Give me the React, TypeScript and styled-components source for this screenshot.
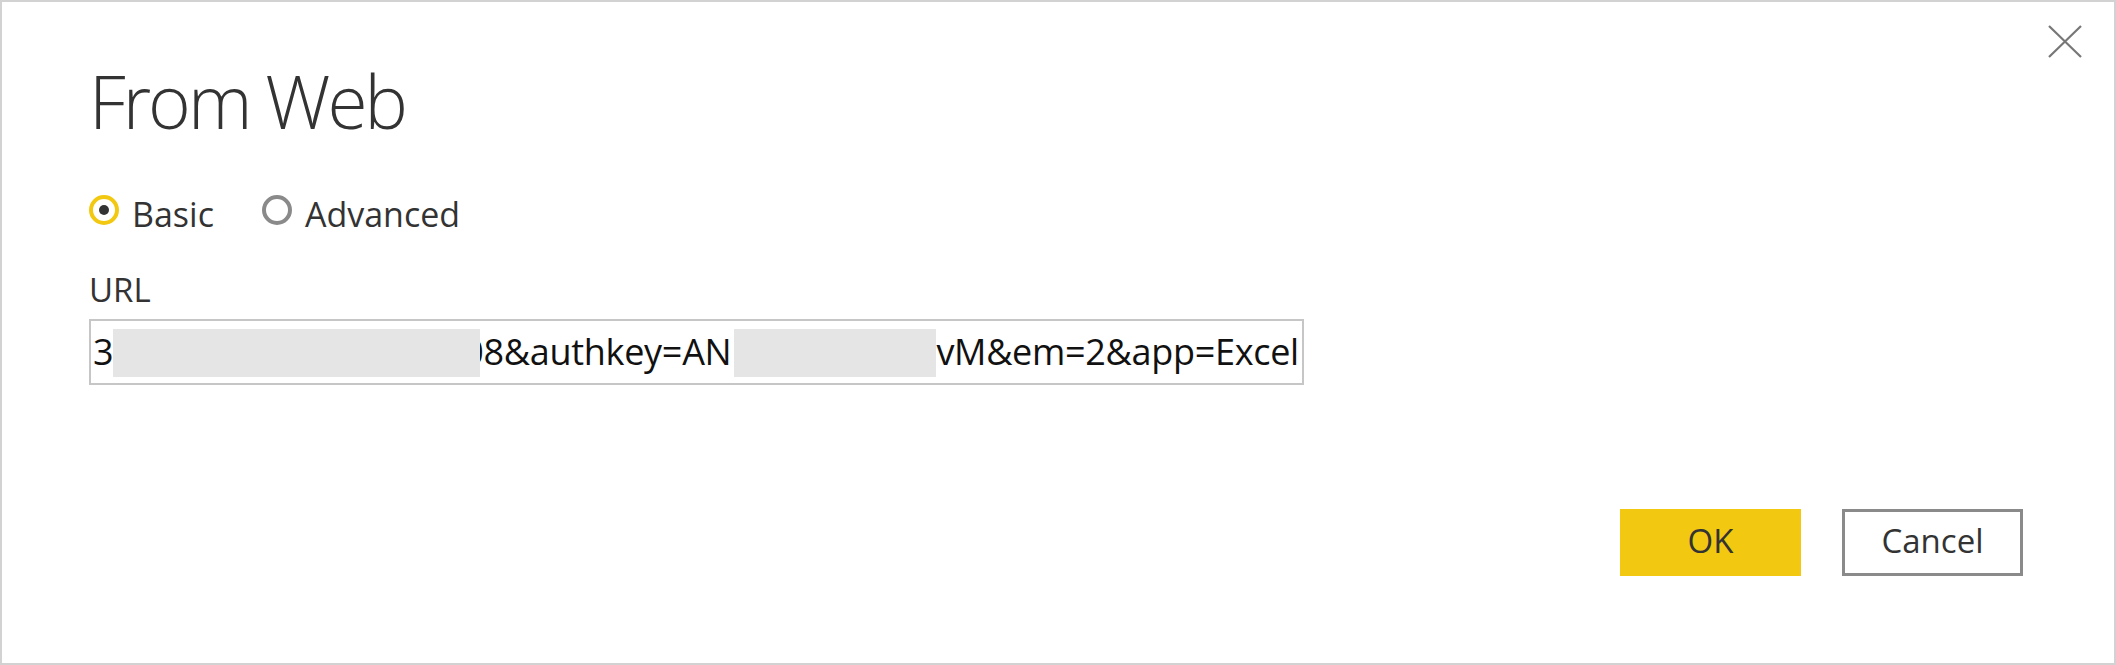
import React from "react";
import styled, { createGlobalStyle } from "styled-components";

const Global = createGlobalStyle`
  html, body { margin: 0; padding: 0; background: #ffffff; }
  * { box-sizing: border-box; }
`;

const Dialog = styled.div`
  position: relative;
  width: 2116px;
  height: 665px;
  border: 2px solid #d2d2d2;
  background: #ffffff;
  padding: 62px 91px 87px 87px;
  display: flex;
  flex-direction: column;
  font-family: "Open Sans", "Noto Sans", sans-serif;
  color: #333333;
`;

const CloseButton = styled.button`
  position: absolute;
  top: 23px;
  right: 32px;
  width: 34px;
  height: 33px;
  padding: 0;
  border: none;
  background: transparent;
  display: flex;
  cursor: pointer;
`;

const Title = styled.h1`
  margin: 0;
  font-size: 73px;
  line-height: 73px;
  font-weight: 300;
  letter-spacing: -3px;
  color: #333333;
  white-space: nowrap;
`;

const RadioGroup = styled.div`
  margin-top: 57px;
  display: flex;
  align-items: flex-start;
  gap: 48px;
`;

const RadioOption = styled.label`
  display: flex;
  align-items: flex-start;
  gap: 13px;
  font-size: 34px;
  line-height: 40px;
  color: #333333;
  cursor: pointer;
`;

const RadioCircle = styled.span<{ $checked: boolean }>`
  margin-top: 1px;
  width: 30px;
  height: 30px;
  border-radius: 50%;
  border: 4px solid ${(p) => (p.$checked ? "#F2C811" : "#8a8a8a")};
  display: flex;
  align-items: center;
  justify-content: center;
  &::after {
    content: "";
    width: 10px;
    height: 10px;
    border-radius: 50%;
    background: ${(p) => (p.$checked ? "#333333" : "transparent")};
  }
`;

const FieldLabel = styled.div`
  margin-top: 36px;
  font-size: 33px;
  line-height: 40px;
  color: #333333;
`;

const UrlBox = styled.div`
  margin-top: 9px;
  width: 1215px;
  height: 66px;
  border: 2px solid #c6c6c6;
  padding-left: 2px;
  display: flex;
  align-items: center;
  overflow: hidden;
  white-space: nowrap;
`;

const UrlText = styled.span<{ $gap?: number }>`
  font-size: 36px;
  line-height: 62px;
  letter-spacing: -0.3px;
  color: #111111;
  margin-left: ${(p) => p.$gap ?? 0}px;
`;

const Redacted = styled.span<{ $w: number; $gap?: number }>`
  position: relative;
  z-index: 1;
  flex: none;
  width: ${(p) => p.$w}px;
  height: 48px;
  margin-top: 2px;
  margin-left: ${(p) => p.$gap ?? 0}px;
  background: #e5e5e5;
`;

const Footer = styled.div`
  margin-top: auto;
  display: flex;
  justify-content: flex-end;
  gap: 41px;
`;

const Button = styled.button<{ $primary?: boolean }>`
  width: 181px;
  height: 67px;
  font-family: "Open Sans", "Noto Sans", sans-serif;
  font-size: 33px;
  color: #333333;
  background: ${(p) => (p.$primary ? "#F2C811" : "#ffffff")};
  border: ${(p) => (p.$primary ? "none" : "3px solid #8a8a8a")};
  padding: 0 0 4px 0;
  cursor: pointer;
`;

export default function App() {
  return (
    <>
      <Global />
      <Dialog>
        <CloseButton aria-label="Close">
          <svg width="34" height="33" viewBox="0 0 34 33">
            <path d="M1 1 L33 32 M33 1 L1 32" stroke="#777777" strokeWidth="2.2" fill="none" />
          </svg>
        </CloseButton>
        <Title>From Web</Title>
        <RadioGroup>
          <RadioOption>
            <RadioCircle $checked />
            Basic
          </RadioOption>
          <RadioOption>
            <RadioCircle $checked={false} />
            Advanced
          </RadioOption>
        </RadioGroup>
        <FieldLabel>URL</FieldLabel>
        <UrlBox>
          <UrlText>3</UrlText>
          <Redacted $w={367} />
          <UrlText $gap={-17}>08&amp;authkey=AN</UrlText>
          <Redacted $w={202} $gap={3} />
          <UrlText>vM&amp;em=2&amp;app=Excel</UrlText>
        </UrlBox>
        <Footer>
          <Button $primary>OK</Button>
          <Button>Cancel</Button>
        </Footer>
      </Dialog>
    </>
  );
}
